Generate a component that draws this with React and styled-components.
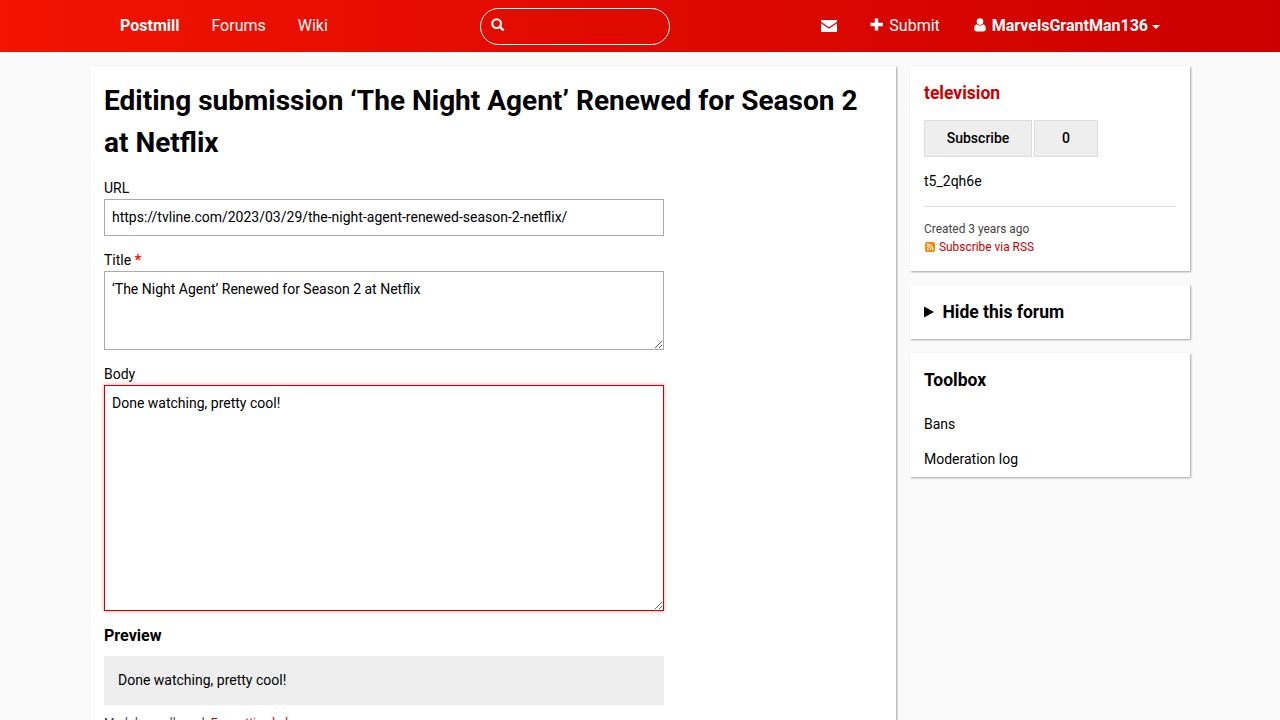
import React from "react";
import styled, { createGlobalStyle, css } from "styled-components";

const GlobalStyle = createGlobalStyle`
  *, *::before, *::after { box-sizing: border-box; }
  html, body { margin: 0; height: 720px; overflow: hidden; }
  body {
    background: #fafafa;
    color: #000;
    font: 14px/21px Roboto, "Liberation Sans", sans-serif;
  }
  h1, h2, h3, p, ul { margin: 0; padding: 0; }
  a { color: inherit; text-decoration: none; }
`;

const Header = styled.header`
  height: 52px;
  background: linear-gradient(to right, #f21300, #c00);
  color: #fff;
  font-size: 16px;
  line-height: 24px;
`;

const HeaderInner = styled.div`
  width: 1100px;
  height: 100%;
  margin: 0 auto;
  padding: 0 14px;
  display: grid;
  grid-template-columns: 376px 190px 1fr;
  align-items: center;
`;

const Nav = styled.nav`
  display: flex;
  justify-content: ${(p) => (p.$end ? "flex-end" : "flex-start")};
`;

const NavLink = styled.a`
  display: flex;
  align-items: center;
  padding: 0 16px;
  font-weight: ${(p) => (p.$bold ? 700 : 400)};
  white-space: nowrap;

  svg { flex: none; fill: currentColor; }
`;

const SearchBox = styled.div`
  display: flex;
  height: 37px;
  margin-top: 1px;
  padding: 9px 10px;
  border: 1px solid #fff;
  border-radius: 18.5px;
`;

const Page = styled.div`
  width: 1100px;
  margin: 14px auto 0;
  display: grid;
  grid-template-columns: 806px 280px;
  gap: 14px;
  align-items: start;
`;

const Card = styled.section`
  padding: 14px;
  background: #fff;
  box-shadow: 1px 1px 2px rgba(0, 0, 0, 0.35);
`;

const MainCard = styled(Card)`
  height: 654px;
  padding-bottom: 0;
`;

const PageTitle = styled.h1`
  font-size: 28px;
  line-height: 42px;
  margin-bottom: 14px;
`;

const Form = styled.form`
  width: 560px;
`;

const Field = styled.div`
  margin-bottom: ${(p) => p.$gap ?? 14}px;
`;

const Label = styled.label`
  display: block;
`;

const Required = styled.span`
  color: #f00;
  font-weight: 700;
`;

const control = css`
  display: block;
  width: 100%;
  margin: 0;
  padding: 7px;
  border: 1px solid #aaa;
  border-radius: 0;
  background: #fff;
  color: #000;
  font: inherit;
  outline: none;
`;

const Input = styled.input`
  ${control}
  height: 37px;
  padding: 6px 7px 8px;
`;

const TextArea = styled.textarea`
  ${control}
  height: ${(p) => p.$height}px;
  resize: vertical;
  ${(p) =>
    p.$active &&
    css`
      border-color: #c00;
      box-shadow: 0 0 4px rgba(204, 0, 0, 0.4);
    `}
`;

const PreviewTitle = styled.h3`
  font-size: 16.1px;
  line-height: 24px;
  margin-bottom: 8px;
`;

const PreviewBox = styled.div`
  padding: 14px;
  background: #eee;
`;

const Help = styled.p`
  margin-top: 9px;
  color: #444;
  font-size: 12px;
  line-height: 18px;
`;

const RedLink = styled.a`
  color: #c00;
`;

const Sidebar = styled.aside`
  display: flex;
  flex-direction: column;
  gap: 14px;
`;

const CardTitle = styled.h2`
  display: flex;
  align-items: center;
  gap: 8.4px;
  font-size: 17.5px;
  line-height: 26px;
  color: ${(p) => (p.$red ? "#c00" : "#000")};
`;

const ButtonPair = styled.div`
  display: flex;
  gap: 2px;
  margin: 14px 0;
`;

const PairButton = styled.button`
  width: ${(p) => p.$width}px;
  height: 37px;
  padding: 0;
  border: 1px solid #ddd;
  background: #eee;
  color: #000;
  font: 500 14px/21px Roboto, "Liberation Sans", sans-serif;
`;

const Meta = styled.div`
  margin-top: 14px;
  padding: 13px 0 1px;
  border-top: 1px solid #ddd;
  color: #444;
  font-size: 11.9px;
  line-height: 18px;
`;

const RssLink = styled(RedLink)`
  display: flex;
  align-items: center;
  gap: 4px;
  padding-left: 1px;
`;

const ToolList = styled.ul`
  list-style: none;
  margin: 14px 0 -14px;
`;

const ToolItem = styled.li`
  padding: 7px 0;
`;

const SearchIcon = () => (
  <svg width="14" height="14" viewBox="0 0 14 14" fill="none" stroke="#fff">
    <circle cx="5.6" cy="5.6" r="4.4" strokeWidth="2.1" />
    <path d="M8.8 8.8 12.6 12.4" strokeWidth="2.4" />
  </svg>
);

const MailIcon = () => (
  <svg width="16" height="12" viewBox="0 0 16 12">
    <path d="M0 0H16V1.8L8 7.2 0 1.8ZM0 3.2 8 8.7 16 3.2V12H0Z" />
  </svg>
);

const PlusIcon = () => (
  <svg width="13" height="13" viewBox="0 0 13 13">
    <path d="M4.8 0.5H8.2V4.8H12.9V8.2H8.2V12.5H4.8V8.2H0.5V4.8H4.8Z" />
  </svg>
);

const UserIcon = () => (
  <svg width="12" height="14" viewBox="0 0 12 14">
    <path d="M2.9 6.2C3.7 7.1 4.8 7.6 6 7.6S8.3 7.1 9.1 6.2C11 6.5 11.8 8.3 11.8 11.1 11.8 12.7 10.9 13.5 9.4 13.5H2.6C1.1 13.5.2 12.7.2 11.1.2 8.3 1 6.5 2.9 6.2Z" />
    <circle cx="6" cy="3.6" r="3.3" />
  </svg>
);

const CaretIcon = () => (
  <svg width="8" height="4" viewBox="0 0 8 4">
    <path d="M0 0H8L4 4Z" />
  </svg>
);

const RssIcon = () => (
  <svg width="10" height="10" viewBox="0 0 10 10">
    <rect width="10" height="10" rx="1.7" fill="#f80" />
    <circle cx="2.7" cy="7.4" r="0.9" fill="#fff" />
    <path
      d="M1.8 4.4A3.8 3.8 0 0 1 5.6 8.2M1.8 2.1A6.1 6.1 0 0 1 7.9 8.2"
      fill="none"
      stroke="#fff"
      strokeWidth="1.1"
    />
  </svg>
);

const DisclosureIcon = () => (
  <svg width="10" height="12" viewBox="0 0 10 12">
    <path d="M0 0.4 10 6 0 11.6Z" />
  </svg>
);

const UserLink = styled(NavLink)`
  padding-left: 18px;
  & > svg:first-child { margin: -2px 6px 0 0; }
  & > svg:last-child { margin: 2px 0 0 4px; }
`;

const SubmitLink = styled(NavLink)`
  padding-left: 17px;
  gap: 6px;
  svg { margin-top: -3px; }
`;

export default function App() {
  return (
    <>
      <GlobalStyle />
      <Header>
        <HeaderInner>
          <Nav>
            <NavLink href="#" $bold>Postmill</NavLink>
            <NavLink href="#">Forums</NavLink>
            <NavLink href="#">Wiki</NavLink>
          </Nav>
          <SearchBox><SearchIcon /></SearchBox>
          <Nav $end>
            <NavLink href="#" aria-label="Messages"><MailIcon /></NavLink>
            <SubmitLink href="#"><PlusIcon />Submit</SubmitLink>
            <UserLink href="#" $bold><UserIcon />MarvelsGrantMan136<CaretIcon /></UserLink>
          </Nav>
        </HeaderInner>
      </Header>
      <Page>
        <MainCard as="main">
          <PageTitle>Editing submission ‘The Night Agent’ Renewed for Season 2 at Netflix</PageTitle>
          <Form>
            <Field>
              <Label htmlFor="url">URL</Label>
              <Input id="url" defaultValue="https://tvline.com/2023/03/29/the-night-agent-renewed-season-2-netflix/" />
            </Field>
            <Field>
              <Label htmlFor="title">Title <Required>*</Required></Label>
              <TextArea id="title" $height={79} defaultValue="‘The Night Agent’ Renewed for Season 2 at Netflix" />
            </Field>
            <Field $gap={13}>
              <Label htmlFor="body">Body</Label>
              <TextArea id="body" $height={226} $active defaultValue="Done watching, pretty cool!" />
            </Field>
            <PreviewTitle>Preview</PreviewTitle>
            <PreviewBox>Done watching, pretty cool!</PreviewBox>
            <Help>Markdown allowed. <RedLink href="#">Formatting help</RedLink>.</Help>
          </Form>
        </MainCard>
        <Sidebar>
          <Card>
            <CardTitle $red>television</CardTitle>
            <ButtonPair>
              <PairButton $width={108}>Subscribe</PairButton>
              <PairButton $width={64}>0</PairButton>
            </ButtonPair>
            <p>t5_2qh6e</p>
            <Meta>
              <p>Created 3 years ago</p>
              <RssLink href="#"><RssIcon />Subscribe via RSS</RssLink>
            </Meta>
          </Card>
          <Card>
            <CardTitle><DisclosureIcon />Hide this forum</CardTitle>
          </Card>
          <Card>
            <CardTitle>Toolbox</CardTitle>
            <ToolList>
              <ToolItem><a href="#">Bans</a></ToolItem>
              <ToolItem><a href="#">Moderation log</a></ToolItem>
            </ToolList>
          </Card>
        </Sidebar>
      </Page>
    </>
  );
}
